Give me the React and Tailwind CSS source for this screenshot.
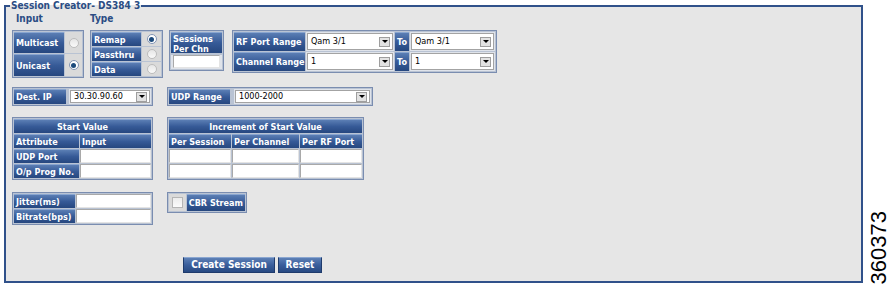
import React from "react";

function Frame({ className = "", children }) {
  return (
    <div className={"border border-[#7a8db0] bg-[#b9c3d3] p-[1px] flex gap-[1px] " + className}>
      {children}
    </div>
  );
}

function Lab({ className = "", children, center = false }) {
  return (
    <div
      className={
        "bg-linear-to-b from-[#5b7eb4] via-[#365a97] to-[#26477f] border-t border-t-[#8aa6d0] text-white font-bold text-[9px] leading-[10px] flex items-center px-[2px] whitespace-nowrap " +
        (center ? "justify-center " : "") +
        className
      }
    >
      {children}
    </div>
  );
}

function Radio({ checked = false, className = "" }) {
  return (
    <div className={"bg-[#dadada] flex items-center justify-center " + className}>
      <span
        className={
          "w-[10px] h-[10px] rounded-full border flex items-center justify-center " +
          (checked ? "border-[#8294b4] bg-white" : "border-[#bdbdbd] bg-linear-to-b from-[#e6e6e6] to-[#fafafa]")
        }
      >
        {checked && <span className="w-[5px] h-[5px] rounded-full bg-[#1c4a7c]" />}
      </span>
    </div>
  );
}

function Sel({ value, className = "" }) {
  return (
    <div className={"bg-[#dfe3ea] p-[1px] flex " + className}>
      <div className="flex-1 bg-white border border-[#a3a3a3] flex items-center">
        <span className="pl-[3px] text-[9px] leading-none text-black font-normal whitespace-nowrap">{value}</span>
        <span className="ml-auto mr-[2px] w-[11px] h-[10px] bg-[#e2e2e2] border border-[#9e9e9e] flex items-center justify-center">
          <span className="w-0 h-0 border-x-[3px] border-x-transparent border-t-[3px] border-t-black" />
        </span>
      </div>
    </div>
  );
}

function Inp({ className = "" }) {
  return (
    <div
      className={
        "bg-white border border-t-[#a9a9a9] border-l-[#a9a9a9] border-r-[#e4e4e4] border-b-[#e4e4e4] " + className
      }
    />
  );
}

function Btn({ children, className = "" }) {
  return (
    <div
      className={
        "h-[16px] bg-linear-to-b from-[#5d80b6] via-[#3a5e9b] to-[#284a82] border border-[#1f3b6c] border-t-[#8aa6d0] text-white font-bold text-[10px] leading-none flex items-center justify-center whitespace-nowrap " +
        className
      }
    >
      {children}
    </div>
  );
}

export default function App() {
  return (
    <div className="flex w-[894px] h-[285px] bg-white [font-family:'DejaVu_Sans_Condensed','DejaVu_Sans',sans-serif]">
      <fieldset className="ml-[4px] w-[859px] h-[283px] border-2 border-[#30518a] bg-[#e6e6e6] pl-[6px] pt-0 pb-0 pr-0 min-w-0">
        <legend className="ml-[-2px] px-[1px] text-[10px] font-bold text-[#2b4d84] leading-[12px]">
          Session Creator- DS384 3
        </legend>
        <div className="flex flex-col">
          {/* labels */}
          <div className="flex h-[12px] mt-[1px] text-[10px] font-bold text-[#2b4d84] leading-[12px]">
            <span className="ml-[4px] w-[74px]">Input</span>
            <span>Type</span>
          </div>

          {/* row 2 */}
          <div className="flex items-start mt-[5px]">
            <Frame className="flex-col w-[72px]">
              <div className="flex gap-[1px] h-[21px]">
                <Lab className="w-[50px]">Multicast</Lab>
                <Radio className="flex-1" />
              </div>
              <div className="flex gap-[1px] h-[22px]">
                <Lab className="w-[50px]">Unicast</Lab>
                <Radio checked className="flex-1" />
              </div>
            </Frame>

            <Frame className="flex-col w-[73px] ml-[6px]">
              <div className="flex gap-[1px] h-[14px]">
                <Lab className="w-[49px]">Remap</Lab>
                <Radio checked className="flex-1" />
              </div>
              <div className="flex gap-[1px] h-[14px]">
                <Lab className="w-[49px]">Passthru</Lab>
                <Radio className="flex-1" />
              </div>
              <div className="flex gap-[1px] h-[14px]">
                <Lab className="w-[49px]">Data</Lab>
                <Radio className="flex-1" />
              </div>
            </Frame>

            <Frame className="flex-col w-[55px] ml-[6px] gap-[2px]">
              <Lab className="h-[21px] whitespace-normal items-start pt-[1px]">
                Sessions
                <br />
                Per Chn
              </Lab>
              <div className="bg-[#dfe3ea] px-[2px] pb-[1px]">
                <Inp className="h-[13px]" />
              </div>
            </Frame>

            <Frame className="flex-col w-[265px] ml-[8px]">
              <div className="flex gap-[1px] h-[19px]">
                <Lab className="w-[71px]">RF Port Range</Lab>
                <Sel className="w-[88px]" value="Qam 3/1" />
                <Lab className="w-[14px] justify-center px-0">To</Lab>
                <Sel className="flex-1" value="Qam 3/1" />
              </div>
              <div className="flex gap-[1px] h-[19px]">
                <Lab className="w-[71px]">Channel Range</Lab>
                <Sel className="w-[88px]" value="1" />
                <Lab className="w-[14px] justify-center px-0">To</Lab>
                <Sel className="flex-1" value="1" />
              </div>
            </Frame>
          </div>

          {/* row 3 */}
          <div className="flex items-start mt-[9px]">
            <Frame className="w-[141px] h-[19px] gap-[3px]">
              <Lab className="w-[52px]">Dest. IP</Lab>
              <Sel className="flex-1" value="30.30.90.60" />
            </Frame>
            <Frame className="w-[206px] h-[19px] gap-[4px] ml-[14px]">
              <Lab className="w-[61px]">UDP Range</Lab>
              <Sel className="flex-1" value="1000-2000" />
            </Frame>
          </div>

          {/* row 4 tables */}
          <div className="flex items-start mt-[11px]">
            <Frame className="flex-col w-[141px]">
              <Lab center className="h-[14px]">Start Value</Lab>
              <div className="flex gap-[1px] h-[14px]">
                <Lab className="w-[65px]">Attribute</Lab>
                <Lab className="flex-1">Input</Lab>
              </div>
              <div className="flex gap-[1px] h-[14px]">
                <Lab className="w-[65px]">UDP Port</Lab>
                <Inp className="flex-1" />
              </div>
              <div className="flex gap-[1px] h-[14px]">
                <Lab className="w-[65px]">O/p Prog No.</Lab>
                <Inp className="flex-1" />
              </div>
            </Frame>

            <Frame className="flex-col w-[197px] ml-[14px]">
              <Lab center className="h-[14px]">Increment of Start Value</Lab>
              <div className="flex gap-[1px] h-[14px]">
                <Lab className="w-[62px]">Per Session</Lab>
                <Lab className="w-[67px]">Per Channel</Lab>
                <Lab className="flex-1">Per RF Port</Lab>
              </div>
              <div className="flex gap-[1px] h-[14px]">
                <Inp className="w-[62px]" />
                <Inp className="w-[67px]" />
                <Inp className="flex-1" />
              </div>
              <div className="flex gap-[1px] h-[14px]">
                <Inp className="w-[62px]" />
                <Inp className="w-[67px]" />
                <Inp className="flex-1" />
              </div>
            </Frame>
          </div>

          {/* row 5 */}
          <div className="flex items-start mt-[12px]">
            <Frame className="flex-col w-[141px]">
              <div className="flex gap-[1px] h-[14px]">
                <Lab className="w-[61px]">Jitter(ms)</Lab>
                <Inp className="flex-1" />
              </div>
              <div className="flex gap-[1px] h-[14px]">
                <Lab className="w-[61px]">Bitrate(bps)</Lab>
                <Inp className="flex-1" />
              </div>
            </Frame>
            <Frame className="w-[80px] h-[21px] ml-[14px]">
              <div className="w-[17px] bg-[#dadada] flex items-center justify-center">
                <span className="w-[11px] h-[11px] border border-[#b5b5b5] bg-linear-to-b from-[#ececec] to-[#fbfbfb]" />
              </div>
              <Lab className="flex-1">CBR Stream</Lab>
            </Frame>
          </div>

          {/* row 6 buttons */}
          <div className="flex mt-[32px] ml-[171px] gap-[3px]">
            <Btn className="w-[92px]">Create Session</Btn>
            <Btn className="w-[44px]">Reset</Btn>
          </div>
        </div>
      </fieldset>
      <div className="flex-1 flex items-end justify-center pb-[1px]">
        <span className="[writing-mode:vertical-rl] rotate-180 text-[22px] leading-none [font-family:'Liberation_Sans',sans-serif] text-black">
          360373
        </span>
      </div>
    </div>
  );
}
